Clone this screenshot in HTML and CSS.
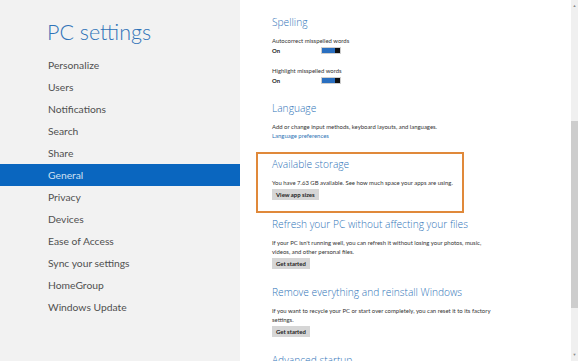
FILE: index.html
```html
<!DOCTYPE html>
<html lang="en">
<head>
    <meta charset="UTF-8">
    <meta name="viewport" content="width=device-width, initial-scale=1.0">
    <title>PC settings</title>
    <link rel="stylesheet" href="styles.css">
</head>
<body>
    <div class="window">
        <aside class="sidebar">
            <h1 class="title">PC settings</h1>
            <ul class="nav">
                <li>Personalize</li>
                <li>Users</li>
                <li>Notifications</li>
                <li>Search</li>
                <li>Share</li>
                <li class="active">General</li>
                <li>Privacy</li>
                <li>Devices</li>
                <li>Ease of Access</li>
                <li>Sync your settings</li>
                <li>HomeGroup</li>
                <li>Windows Update</li>
            </ul>
        </aside>

        <main class="content">
            <section class="group">
                <h2>Spelling</h2>
                <div class="setting">
                    <p class="text">Autocorrect misspelled words</p>
                    <div class="switchRow">
                        <span class="state">On</span>
                        <span class="toggle"><span class="knob"></span></span>
                    </div>
                </div>
                <div class="setting">
                    <p class="text">Highlight misspelled words</p>
                    <div class="switchRow">
                        <span class="state">On</span>
                        <span class="toggle"><span class="knob"></span></span>
                    </div>
                </div>
            </section>

            <section class="group">
                <h2>Language</h2>
                <p class="text">Add or change input methods, keyboard layouts, and languages.</p>
                <a class="link" href="#">Language preferences</a>
            </section>

            <section class="group highlight">
                <h2>Available storage</h2>
                <p class="text">You have 7.63 GB available. See how much space your apps are using.</p>
                <button class="btn">View app sizes</button>
            </section>

            <section class="group">
                <h2>Refresh your PC without affecting your files</h2>
                <p class="text">If your PC isn't running well, you can refresh it without losing your photos, music, videos, and other personal files.</p>
                <button class="btn">Get started</button>
            </section>

            <section class="group">
                <h2>Remove everything and reinstall Windows</h2>
                <p class="text wide">If you want to recycle your PC or start over completely, you can reset it to its factory settings.</p>
                <button class="btn">Get started</button>
            </section>

            <section class="group last">
                <h2>Advanced startup</h2>
            </section>
        </main>

        <div class="scrollbar">
            <span class="arrow">&#9650;</span>
            <div class="track"><div class="thumb"></div></div>
            <span class="arrow">&#9660;</span>
        </div>
    </div>
</body>
</html>
```

FILE: styles.css
```css
html, body {
    margin: 0;
    padding: 0;
    height: 361px;
    overflow: hidden;
}
body {
    font-family: Lato, "Open Sans", Arial, sans-serif;
    background: #ffffff;
}
.window {
    display: flex;
    height: 361px;
}

/* left column */
.sidebar {
    width: 240px;
    flex-shrink: 0;
    background-color: #f2f2f2;
}
.title {
    margin: 0;
    padding: 18px 0 0 47px;
    height: 54px;
    box-sizing: border-box;
    font-size: 21.5px;
    line-height: 28px;
    font-weight: 300;
    color: #2f73b8;
}
.nav {
    list-style: none;
    margin: 0;
    padding: 0;
}
.nav li {
    height: 22px;
    line-height: 22px;
    padding-left: 48px;
    font-size: 10.3px;
    color: #505050;
}
.nav li.active {
    background-color: #0a66bf;
    color: #cfe0f2;
}

/* right column */
.content {
    flex: 1;
    padding: 14px 0 0 32px;
    min-width: 0;
}
.group {
    margin-bottom: 15px;
}
.group h2 {
    margin: 0 0 6px;
    font-family: "Open Sans", Lato, sans-serif;
    font-size: 10.2px;
    line-height: 16px;
    font-weight: 300;
    color: #2f74b8;
    white-space: nowrap;
}
.text {
    margin: 0;
    font-size: 5.95px;
    line-height: 9px;
    color: #333333;
    width: 214px;
}
.text.wide {
    width: 226px;
}
.setting {
    margin-bottom: 11px;
}
.switchRow {
    display: flex;
    align-items: center;
    height: 9px;
    margin-top: 1px;
}
.state {
    font-size: 5.95px;
    font-weight: 700;
    color: #222222;
    width: 49px;
}
.toggle {
    display: flex;
    justify-content: flex-end;
    width: 20px;
    height: 7px;
    background-color: #2a6fc0;
    border: 1px solid #cfcfcf;
    box-sizing: border-box;
}
.knob {
    width: 5px;
    height: 100%;
    background-color: #111111;
}
.link {
    display: block;
    font-size: 5.95px;
    line-height: 9px;
    color: #2e74b5;
    text-decoration: none;
}
.btn {
    display: block;
    margin-top: 2px;
    padding: 0 4px;
    height: 11px;
    border: none;
    background-color: #d6d6d6;
    font-family: inherit;
    font-size: 5.95px;
    font-weight: 700;
    color: #222222;
}
.highlight {
    margin-left: -16px;
    margin-top: -3px;
    width: 208px;
    box-sizing: border-box;
    padding: 2px 0 11px 14px;
    border: 2px solid #e0893a;
    margin-bottom: 3px;
}
.last {
    margin-bottom: 0;
}

/* scrollbar */
.scrollbar {
    width: 7px;
    flex-shrink: 0;
    display: flex;
    flex-direction: column;
    background-color: #f0f0f0;
}
.arrow {
    height: 12px;
    font-size: 4px;
    line-height: 12px;
    text-align: center;
    color: #8a8a8a;
}
.track {
    flex: 1;
    padding-top: 109px;
}
.thumb {
    height: 187px;
    background-color: #cdcdcd;
}
```
